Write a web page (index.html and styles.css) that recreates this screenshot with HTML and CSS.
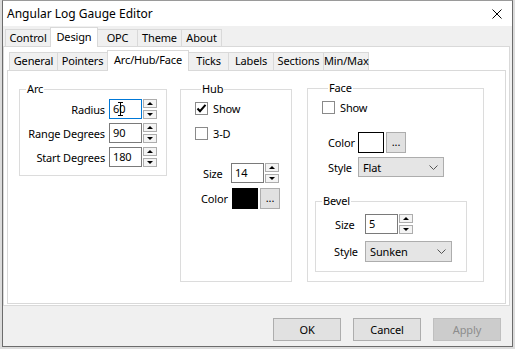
FILE: index.html
```html
<!DOCTYPE html>
<html>
<head>
<meta charset="utf-8">
<title>Angular Log Gauge Editor</title>
<link rel="stylesheet" href="styles.css">
</head>
<body>
<div class="window">
  <div class="titlebar">
    <span class="title">Angular Log Gauge Editor</span>
    <svg class="close" width="10" height="10" viewBox="0 0 10 10"><path d="M0.5 0.5L9.5 9.5M9.5 0.5L0.5 9.5" stroke="#000" stroke-width="1" fill="none"/></svg>
  </div>
  <div class="client">
    <div class="tabctl outer">
      <div class="tabs">
        <div class="tab t-control">Control</div>
        <div class="tab sel t-design">Design</div>
        <div class="tab t-opc">OPC</div>
        <div class="tab t-theme">Theme</div>
        <div class="tab t-about">About</div>
      </div>
      <div class="page outer-page">
        <div class="tabctl inner">
          <div class="tabs">
            <div class="tab t-general">General</div>
            <div class="tab t-pointers">Pointers</div>
            <div class="tab sel t-arc">Arc/Hub/Face</div>
            <div class="tab t-ticks">Ticks</div>
            <div class="tab t-labels">Labels</div>
            <div class="tab t-sections">Sections</div>
            <div class="tab t-minmax">Min/Max</div>
          </div>
          <div class="page inner-page">
            <fieldset class="group arc">
              <legend>Arc</legend>
              <div class="arc-grid">
                <label class="lbl-r">Radius</label>
                <div class="num">
                  <div class="num-box focus">60<svg class="ibeam" width="7" height="14" viewBox="0 0 7 14"><path d="M1 0.5H6M3.5 0.5V13.5M1 13.5H6" stroke="#000" stroke-width="1" fill="none"/></svg></div>
                  <div class="spin"><span class="sb up"></span><span class="sb down"></span></div>
                </div>
                <label class="lbl-r">Range Degrees</label>
                <div class="num">
                  <div class="num-box">90</div>
                  <div class="spin"><span class="sb up"></span><span class="sb down"></span></div>
                </div>
                <label class="lbl-r">Start Degrees</label>
                <div class="num">
                  <div class="num-box">180</div>
                  <div class="spin"><span class="sb up"></span><span class="sb down"></span></div>
                </div>
              </div>
            </fieldset>

            <fieldset class="group hub">
              <legend>Hub</legend>
              <div class="check-row">
                <span class="cb checked"><svg width="11" height="11" viewBox="0 0 11 11"><path d="M1.5 5.5L4 8.2L9.5 1.8" stroke="#000" stroke-width="2" fill="none"/></svg></span>
                <span>Show</span>
              </div>
              <div class="check-row second">
                <span class="cb"></span>
                <span>3-D</span>
              </div>
              <div class="field-row hub-size">
                <label class="lbl">Size</label>
                <div class="num">
                  <div class="num-box">14</div>
                  <div class="spin"><span class="sb up"></span><span class="sb down"></span></div>
                </div>
              </div>
              <div class="field-row hub-color">
                <label class="lbl">Color</label>
                <span class="swatch black"></span>
                <span class="dots">...</span>
              </div>
            </fieldset>

            <fieldset class="group face">
              <legend>Face</legend>
              <div class="check-row">
                <span class="cb"></span>
                <span>Show</span>
              </div>
              <div class="field-row face-color">
                <label class="lbl">Color</label>
                <span class="swatch white"></span>
                <span class="dots">...</span>
              </div>
              <div class="field-row face-style">
                <label class="lbl">Style</label>
                <div class="combo face-combo"><span>Flat</span><svg width="9" height="5" viewBox="0 0 9 5"><path d="M0.5 0.5L4.5 4.5L8.5 0.5" stroke="#555" stroke-width="1" fill="none"/></svg></div>
              </div>
              <fieldset class="group bevel">
                <legend>Bevel</legend>
                <div class="field-row bevel-size">
                  <label class="lbl">Size</label>
                  <div class="num">
                    <div class="num-box">5</div>
                    <div class="spin"><span class="sb up"></span><span class="sb down"></span></div>
                  </div>
                </div>
                <div class="field-row bevel-style">
                  <label class="lbl">Style</label>
                  <div class="combo bevel-combo"><span>Sunken</span><svg width="9" height="5" viewBox="0 0 9 5"><path d="M0.5 0.5L4.5 4.5L8.5 0.5" stroke="#555" stroke-width="1" fill="none"/></svg></div>
                </div>
              </fieldset>
            </fieldset>
          </div>
        </div>
      </div>
    </div>
    <div class="buttons">
      <button class="btn">OK</button>
      <button class="btn">Cancel</button>
      <button class="btn disabled">Apply</button>
    </div>
  </div>
</div>
</body>
</html>
```
FILE: styles.css
```css
* { box-sizing: border-box; }
html, body { margin: 0; padding: 0; }
body {
  width: 515px;
  height: 349px;
  overflow: hidden;
  background: #dcdcdc;
  font-family: "Noto Sans", "Open Sans", sans-serif;
  font-size: 11px;
  letter-spacing: -0.15px;
  color: #000;
}

.window {
  margin-left: 2px;
  width: 511px;
  height: 347px;
  border: 1px solid #6c6c6c;
  border-top-color: #9a9a9a;
  background: #f0f0f0;
  display: flex;
  flex-direction: column;
}

.titlebar {
  height: 25px;
  background: #fff;
  display: flex;
  align-items: center;
  justify-content: space-between;
  padding: 0 10px 0 4px;
}
.title { font-size: 12px; letter-spacing: 0; }
.close { display: block; margin-top: 1px; }

.client {
  flex: 1;
  padding-top: 1px;
  display: flex;
  flex-direction: column;
}

/* tabs */
.tabctl.outer { width: 507px; }
.tabs {
  display: flex;
  align-items: flex-end;
}
.outer > .tabs { height: 19px; padding-left: 2px; }
.inner > .tabs { height: 20px; padding-left: 2px; }

.tab {
  border: 1px solid #d9d9d9;
  border-bottom: none;
  background: #f0f0f0;
  text-align: center;
  margin-left: -1px;
  white-space: nowrap;
}
.tab:first-child { margin-left: 0; }
.outer > .tabs > .tab { height: 17px; line-height: 15px; }
.inner > .tabs > .tab { height: 18px; line-height: 16px; }
.tab.sel {
  background: #fff;
  position: relative;
  z-index: 1;
  margin-bottom: -1px;
}
.outer > .tabs > .tab.sel { height: 20px; line-height: 17px; }
.inner > .tabs > .tab.sel { height: 21px; line-height: 18px; }

.t-control { width: 46px; }
.t-design { width: 48px; }
.t-opc { width: 41px; }
.t-theme { width: 45px; }
.t-about { width: 41px; }

.t-general { width: 49px; }
.t-pointers { width: 51px; }
.t-arc { width: 82px; }
.t-ticks { width: 41px; }
.t-labels { width: 46px; }
.t-sections { width: 51px; }
.t-minmax { width: 46px; }

.page {
  border: 1px solid #d9d9d9;
  background: #fff;
}
.outer-page {
  height: 260px;
  padding: 3px 3px 1px 3px;
}
.inner-page {
  height: 234px;
  padding: 11px 0 0 11px;
  display: flex;
  align-items: flex-start;
}

/* group boxes */
.group {
  margin: 0;
  padding: 0;
  border: 1px solid #dcdcdc;
  min-width: 0;
}
.group > legend {
  padding: 0 1px;
  margin-left: 6px;
  line-height: 14px;
  height: 14px;
}

.arc { width: 148px; padding: 3px 0 8px 0; }
.hub { width: 112px; height: 200px; margin-left: 13px; padding: 6px 0 0 14px; }
.face { width: 177px; height: 201px; margin-left: 15px; margin-top: -1px; padding: 6px 0 0 14px; }
.bevel { width: 152px; height: 78px; margin: 17px 0 0 -7px; padding: 6px 0 0 0; }

.arc-grid {
  display: grid;
  grid-template-columns: 85px 48px;
  column-gap: 4px;
  row-gap: 4px;
  align-items: center;
}
.lbl-r { text-align: right; }

/* numeric up-down */
.num { display: flex; gap: 1px; height: 20px; }
.num-box {
  position: relative;
  width: 33px;
  height: 20px;
  border: 1px solid #7a7a7a;
  background: #fff;
  padding-left: 3px;
  line-height: 18px;
}
.num-box.focus { border-color: #0078d7; }
.ibeam { position: absolute; left: 7px; top: 2px; }
.spin {
  width: 14px;
  display: flex;
  flex-direction: column;
  gap: 2px;
}
.sb {
  height: 9px;
  border: 1px solid #adadad;
  background: #f4f4f4;
  display: flex;
  align-items: center;
  justify-content: center;
}
.sb::after {
  content: "";
  width: 0;
  height: 0;
  border-left: 3px solid transparent;
  border-right: 3px solid transparent;
}
.sb.up::after { border-bottom: 3px solid #000; }
.sb.down::after { border-top: 3px solid #000; }

/* checkbox */
.check-row {
  display: flex;
  align-items: center;
  gap: 5px;
  height: 13px;
}
.check-row.second { margin-top: 12px; }
.cb {
  width: 13px;
  height: 13px;
  border: 1px solid #8a8a8a;
  background: #fff;
  display: flex;
  align-items: center;
  justify-content: center;
}
.cb svg { display: block; }

/* rows */
.field-row { display: flex; align-items: center; }
.lbl { display: block; }

.hub-size { margin-top: 23px; margin-left: 8px; height: 20px; }
.hub-size .lbl { width: 28px; }
.hub-color { margin-top: 5px; margin-left: 6px; height: 21px; }
.hub-color .lbl { width: 31px; }

.face-color { margin-top: 18px; margin-left: 6px; height: 21px; }
.face-color .lbl { width: 30px; }
.face-style { margin-top: 4px; margin-left: 6px; height: 20px; }
.face-style .lbl { width: 30px; }

.bevel-size { margin-left: 19px; height: 20px; }
.bevel-size .lbl { width: 30px; }
.bevel-style { margin-top: 7px; margin-left: 18px; height: 21px; }
.bevel-style .lbl { width: 31px; }

.swatch {
  width: 26px;
  height: 21px;
  border: 1px solid #000;
}
.swatch.black { background: #000; }
.swatch.white { background: #fff; }
.dots {
  width: 20px;
  height: 21px;
  margin-left: 2px;
  border: 1px solid #adadad;
  background: #e1e1e1;
  text-align: center;
  line-height: 17px;
  font-size: 11px;
}

.combo {
  height: 20px;
  border: 1px solid #adadad;
  background: #e5e5e5;
  display: flex;
  align-items: center;
  justify-content: space-between;
  padding: 0 5px 0 4px;
}
.combo svg { display: block; }
.face-combo { width: 86px; }
.bevel-combo { width: 87px; height: 21px; }

/* bottom buttons */
.buttons {
  margin-top: 12px;
  margin-right: 11px;
  display: flex;
  justify-content: flex-end;
  gap: 12px;
}
.btn {
  width: 68px;
  height: 23px;
  border: 1px solid #adadad;
  background: #e1e1e1;
  font-family: inherit;
  font-size: 11px;
  letter-spacing: -0.15px;
  color: #000;
  padding: 0;
}
.btn.disabled {
  background: #cccccc;
  border-color: #bfbfbf;
  color: #8c8c8c;
}
```
